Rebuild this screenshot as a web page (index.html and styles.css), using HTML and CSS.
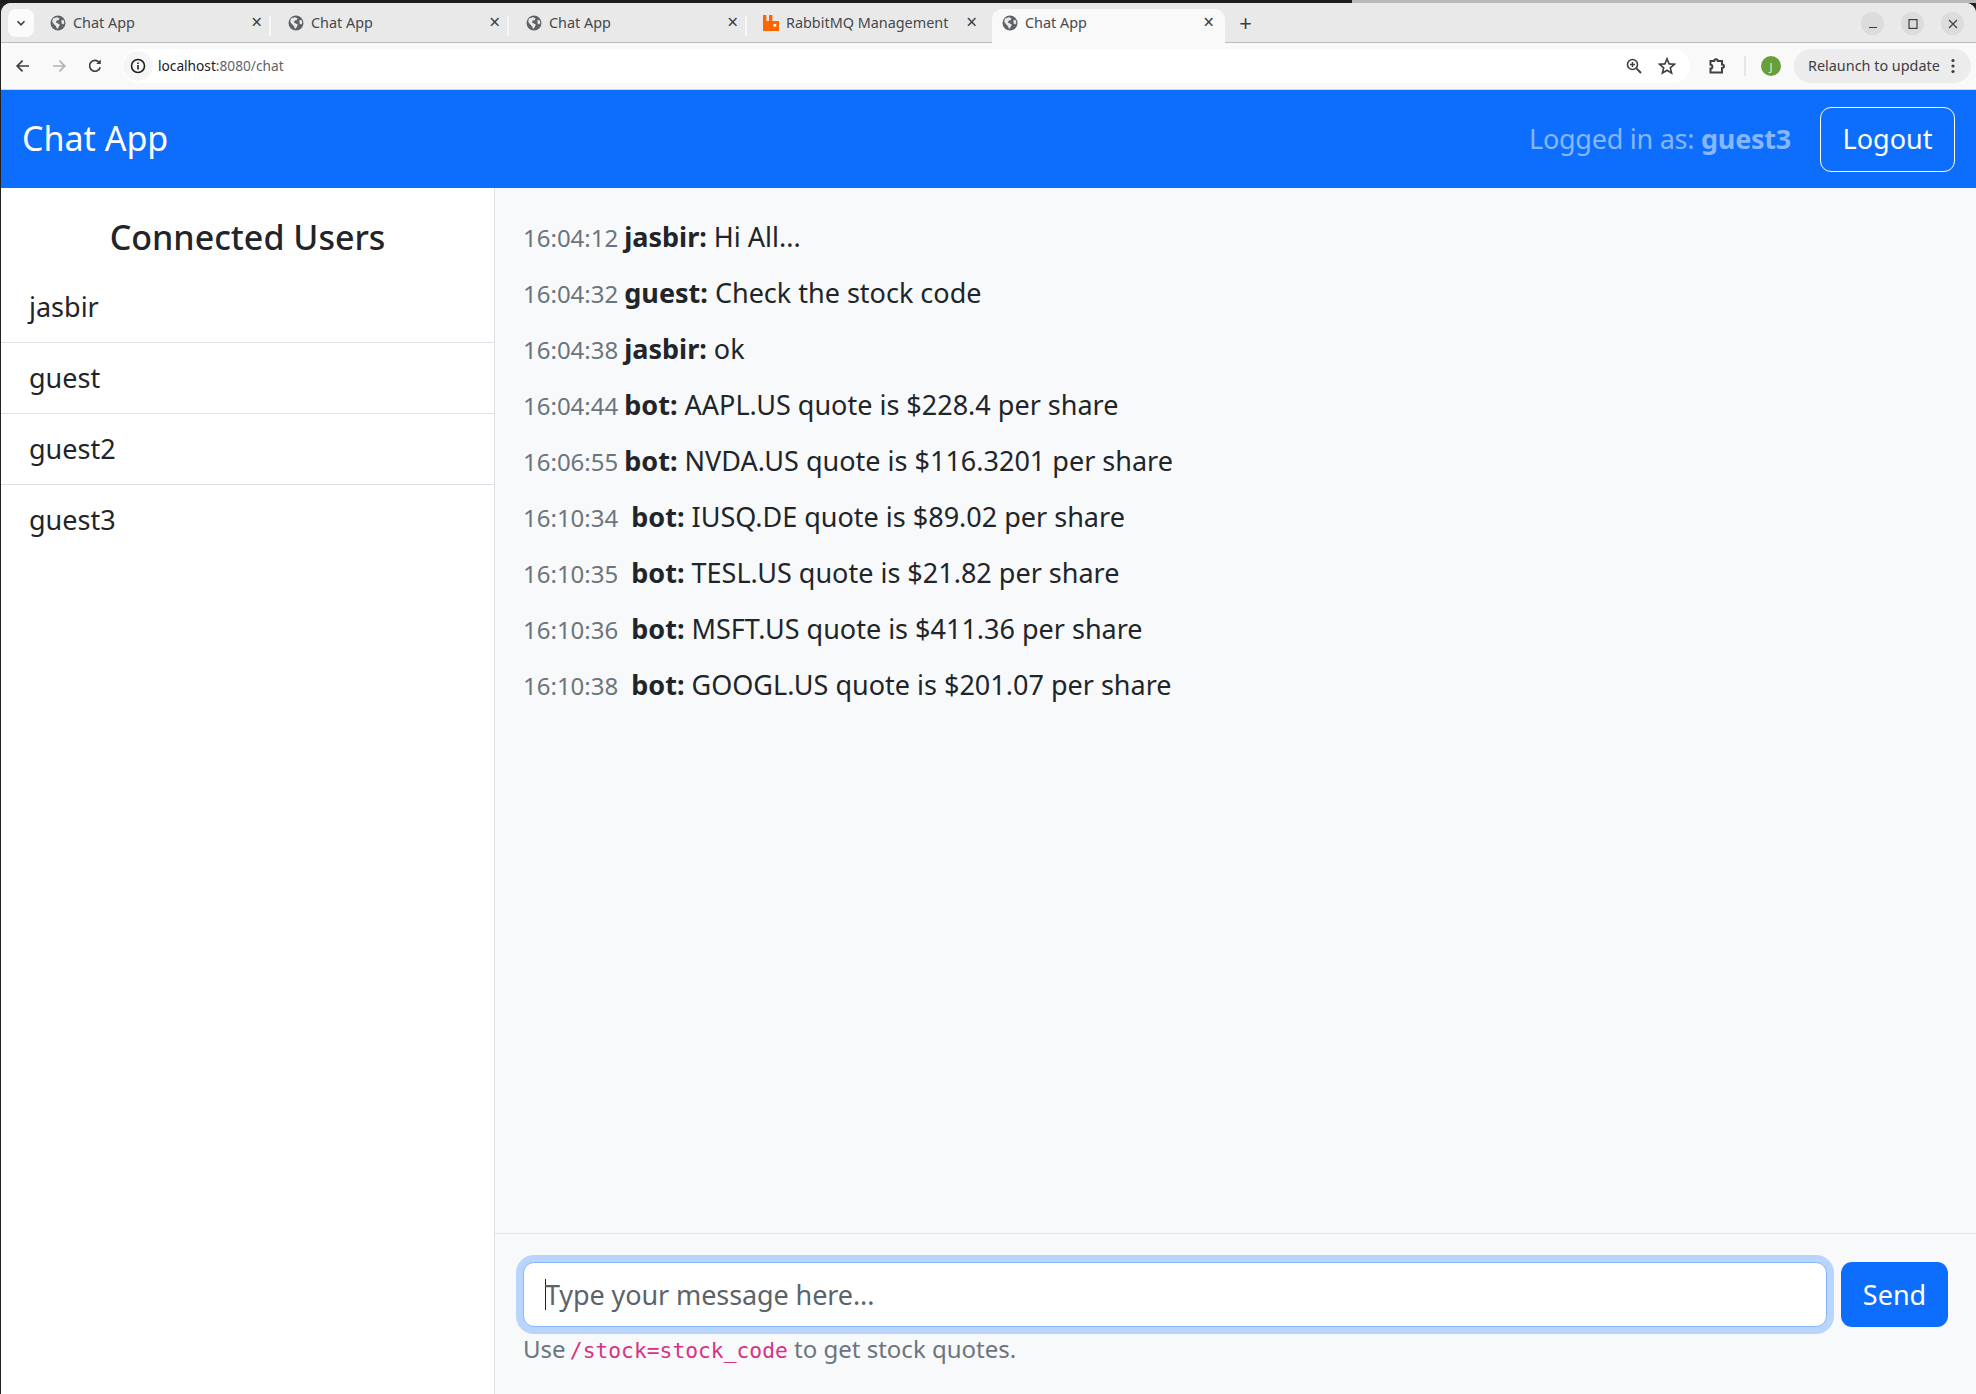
FILE: index.html
```html
<!DOCTYPE html>
<html lang="en">
<head>
    <meta charset="UTF-8">
    <title>Chat App</title>
    <link rel="stylesheet" href="styles.css">
</head>
<body>
    <svg class="defs" width="0" height="0">
        <symbol id="globe" viewBox="0 0 16 16">
            <circle cx="8" cy="8" r="7.5" fill="#5f6368"/>
            <path d="M3 3.5 7 2.2 9.6 3.4 8.6 5.2 6.6 5.6 6 7.4 7.8 8.6 9.8 9.6 8.8 12 7 14 6 11.2 3.6 8.8 2.2 6.4Z" fill="#e9e9e9"/>
            <path d="M11.4 5.6 13.4 4.8 14.4 7.8 13.2 9.6 11.6 8.4Z" fill="#e9e9e9"/>
        </symbol>
    </svg>

    <div class="desktop-strip">
        <div class="strip-dark"></div>
        <div class="strip-light"></div>
    </div>

    <div class="browser">
        <div class="tabstrip">
            <div class="tab-menu">
                <svg width="12" height="12" viewBox="0 0 12 12"><path d="M2.5 4.2 6 7.8 9.5 4.2" fill="none" stroke="#3c4043" stroke-width="1.6"/></svg>
            </div>
            <div class="tab">
                <svg class="favicon"><use href="#globe"/></svg>
                <span class="tab-title">Chat App</span>
                <span class="tab-close">×</span>
            </div>
            <div class="tab">
                <svg class="favicon"><use href="#globe"/></svg>
                <span class="tab-title">Chat App</span>
                <span class="tab-close">×</span>
            </div>
            <div class="tab">
                <svg class="favicon"><use href="#globe"/></svg>
                <span class="tab-title">Chat App</span>
                <span class="tab-close">×</span>
            </div>
            <div class="tab tab-last">
                <svg class="favicon" viewBox="0 0 16 16"><path d="M0 0H3.4V6H6V0H9.4V6H16V16H0Z" fill="#ff6600"/><rect x="10.6" y="9" width="2.6" height="2.6" fill="#fff"/></svg>
                <span class="tab-title">RabbitMQ Management</span>
                <span class="tab-close">×</span>
            </div>
            <div class="tab tab-active">
                <svg class="favicon"><use href="#globe"/></svg>
                <span class="tab-title">Chat App</span>
                <span class="tab-close">×</span>
            </div>
            <div class="new-tab">+</div>
            <div class="window-controls">
                <div class="win-btn"><svg width="12" height="12" viewBox="0 0 12 12"><path d="M2 9.5H10" stroke="#3c4043" stroke-width="1.2"/></svg></div>
                <div class="win-btn"><svg width="12" height="12" viewBox="0 0 12 12"><rect x="2" y="1.6" width="8" height="8.8" fill="none" stroke="#3c4043" stroke-width="1.2"/></svg></div>
                <div class="win-btn"><svg width="12" height="12" viewBox="0 0 12 12"><path d="M2 2 10 10M10 2 2 10" stroke="#3c4043" stroke-width="1.2"/></svg></div>
            </div>
        </div>

        <div class="toolbar">
            <div class="nav-icons">
                <svg width="16" height="16" viewBox="0 0 16 16"><path d="M14 8H2.6M7.6 2.6 2.2 8l5.4 5.4" fill="none" stroke="#3c4043" stroke-width="1.7"/></svg>
                <svg width="16" height="16" viewBox="0 0 16 16"><path d="M2 8H13.4M8.4 2.6 13.8 8l-5.4 5.4" fill="none" stroke="#b0b2b5" stroke-width="1.7"/></svg>
                <svg width="16" height="16" viewBox="0 0 16 16"><path d="M13.2 9.2A5.4 5.4 0 1 1 12 4.2" fill="none" stroke="#3c4043" stroke-width="1.7"/><path d="M13.8 1.4V6H9.2Z" fill="#3c4043"/></svg>
            </div>
            <div class="omnibox">
                <div class="site-info">
                    <svg width="16" height="16" viewBox="0 0 16 16"><circle cx="8" cy="8" r="6.5" fill="none" stroke="#202124" stroke-width="1.6"/><path d="M8 7V11.6M8 4.4V6" stroke="#202124" stroke-width="1.6"/></svg>
                </div>
                <span class="url"><span class="url-host">localhost</span>:8080/chat</span>
                <div class="omni-actions">
                    <svg width="18" height="18" viewBox="0 0 18 18"><circle cx="7.5" cy="7.5" r="5" fill="none" stroke="#3c4043" stroke-width="1.6"/><path d="M11.4 11.4 16 16" stroke="#3c4043" stroke-width="2"/><path d="M5 7.5H10M7.5 5V10" stroke="#3c4043" stroke-width="1.4"/></svg>
                    <svg width="18" height="18" viewBox="0 0 18 18"><path d="M9 1.8 11.1 6.9 16.4 7.3 12.3 10.8 13.6 16.1 9 13.2 4.4 16.1 5.7 10.8 1.6 7.3 6.9 6.9Z" fill="none" stroke="#3c4043" stroke-width="1.6"/></svg>
                </div>
            </div>
            <svg class="ext-icon" width="18" height="18" viewBox="0 0 18 18"><path d="M2.5 4H6.2C6.2 1.6 9.8 1.6 9.8 4H14V7.6C16.6 7.6 16.6 11 14 11V15.5H2.5V11.6C5 11.6 5 7.8 2.5 7.8Z" fill="none" stroke="#3c4043" stroke-width="2"/></svg>
            <div class="toolbar-sep"></div>
            <div class="avatar">J</div>
            <div class="relaunch">
                <span>Relaunch to update</span>
                <svg width="4" height="16" viewBox="0 0 4 16"><circle cx="2" cy="2.5" r="1.6" fill="#3c4043"/><circle cx="2" cy="8" r="1.6" fill="#3c4043"/><circle cx="2" cy="13.5" r="1.6" fill="#3c4043"/></svg>
            </div>
        </div>

        <nav class="navbar">
            <span class="brand">Chat App</span>
            <div class="nav-right">
                <span class="logged-in">Logged in as: <strong>guest3</strong></span>
                <button class="btn-logout">Logout</button>
            </div>
        </nav>

        <div class="main">
            <aside class="sidebar">
                <h4 class="sidebar-title">Connected Users</h4>
                <ul class="user-list">
                    <li class="user-item">jasbir</li>
                    <li class="user-item">guest</li>
                    <li class="user-item">guest2</li>
                    <li class="user-item">guest3</li>
                </ul>
            </aside>

            <section class="chat">
                <div class="messages">
                    <div class="message"><span class="time">16:04:12</span> <strong>jasbir:</strong> Hi All...</div>
                    <div class="message"><span class="time">16:04:32</span> <strong>guest:</strong> Check the stock code</div>
                    <div class="message"><span class="time">16:04:38</span> <strong>jasbir:</strong> ok</div>
                    <div class="message"><span class="time">16:04:44</span> <strong>bot:</strong> AAPL.US quote is $228.4 per share</div>
                    <div class="message"><span class="time">16:06:55</span> <strong>bot:</strong> NVDA.US quote is $116.3201 per share</div>
                    <div class="message"><span class="time time-wide">16:10:34</span> <strong>bot:</strong> IUSQ.DE quote is $89.02 per share</div>
                    <div class="message"><span class="time time-wide">16:10:35</span> <strong>bot:</strong> TESL.US quote is $21.82 per share</div>
                    <div class="message"><span class="time time-wide">16:10:36</span> <strong>bot:</strong> MSFT.US quote is $411.36 per share</div>
                    <div class="message"><span class="time time-wide">16:10:38</span> <strong>bot:</strong> GOOGL.US quote is $201.07 per share</div>
                </div>
                <div class="composer">
                    <div class="input-row">
                        <div class="message-input"><span class="caret"></span>Type your message here...</div>
                        <button class="btn-send">Send</button>
                    </div>
                    <div class="hint">Use <code>/stock=stock_code</code> to get stock quotes.</div>
                </div>
            </section>
        </div>
    </div>
</body>
</html>
```

FILE: styles.css
```css
* {
    box-sizing: border-box;
}
html, body {
    height: 100%;
}
body {
    margin: 0;
    height: 1394px;
    overflow: hidden;
    display: flex;
    flex-direction: column;
    font-family: "Noto Sans", sans-serif;
    color: #212529;
    background: #222;
}
.defs {
    display: none;
}

/* desktop behind the window */
.desktop-strip {
    display: flex;
    height: 3px;
    flex: none;
}
.strip-dark {
    width: 1352px;
    background: #1d1d1d;
}
.strip-light {
    flex: 1;
    background: #b9b9b9;
}
.browser {
    flex: 1;
    min-height: 0;
    display: flex;
    flex-direction: column;
    margin-left: 1px;
    border-radius: 10px 10px 0 0;
    overflow: hidden;
    background: #fff;
}

/* tab strip */
.tabstrip {
    height: 40px;
    flex: none;
    display: flex;
    align-items: flex-end;
    background: #e9e9e9;
    border-bottom: 1px solid #bdbdbd;
    font-size: 14.4px;
    color: #45494d;
}
.tab-menu {
    width: 26px;
    height: 28px;
    margin: 0 1px 5px 7px;
    border-radius: 8px;
    background: #fbfbfb;
    display: flex;
    align-items: center;
    justify-content: center;
}
.tab {
    width: 238px;
    height: 34px;
    margin-bottom: -1px;
    padding: 0 9px 7px 15px;
    display: flex;
    align-items: center;
    border-right: 2px solid transparent;
    background: linear-gradient(#f7f7f7, #f7f7f7) right 7px / 2px 20px no-repeat;
}
.tab-last {
    background: none;
    padding-left: 14px;
    padding-right: 13px;
    width: 243px;
}
.tab-active {
    width: 233px;
    padding-left: 10px;
    padding-right: 11px;
    background: #f9f9f9;
    border-radius: 10px 10px 0 0;
    border: 0;
    margin-bottom: -1px;
    z-index: 1;
}
.favicon {
    width: 16px;
    height: 16px;
    flex: none;
    margin-right: 7px;
}
.tab-title {
    flex: 1;
    white-space: nowrap;
}
.tab-close {
    font-size: 19px;
    line-height: 1;
    color: #3c4043;
}
.new-tab {
    width: 36px;
    height: 34px;
    padding-left: 5px;
    font-size: 22px;
    line-height: 28px;
    color: #3c4043;
    text-align: center;
}
.window-controls {
    margin-left: auto;
    margin-right: 12px;
    margin-bottom: 7px;
    display: flex;
    gap: 17px;
}
.win-btn {
    width: 23px;
    height: 23px;
    border-radius: 50%;
    background: #dcdcdc;
    display: flex;
    align-items: center;
    justify-content: center;
}

/* toolbar */
.toolbar {
    height: 47px;
    flex: none;
    display: flex;
    align-items: center;
    background: #f9f9f9;
    border-bottom: 1px solid #d5d5d5;
    font-size: 14px;
}
.nav-icons {
    display: flex;
    gap: 20px;
    padding-left: 14px;
    width: 121px;
}
.omnibox {
    width: 1568px;
    height: 34px;
    display: flex;
    align-items: center;
    background: #fff;
    border-radius: 17px;
}
.site-info {
    width: 30px;
    height: 30px;
    margin: 0 5px 0 1px;
    border-radius: 50%;
    background: #f5f5f5;
    display: flex;
    align-items: center;
    justify-content: center;
}
.url {
    flex: 1;
    padding-bottom: 1px;
    font-size: 13.7px;
    color: #5f6368;
}
.url-host {
    color: #202124;
}
.omni-actions {
    display: flex;
    gap: 15px;
    padding-right: 14px;
    align-items: center;
}
.ext-icon {
    margin-left: 18px;
    flex: none;
}
.toolbar-sep {
    width: 2px;
    height: 20px;
    margin: 0 15px 0 18px;
    background: #e6e6e6;
}
.avatar {
    width: 20px;
    height: 20px;
    border-radius: 50%;
    background: #689f38;
    color: #e8f0dc;
    font-size: 11px;
    display: flex;
    align-items: center;
    justify-content: center;
}
.relaunch {
    width: 177px;
    height: 34px;
    margin-left: 13px;
    padding: 0 16px 1px 14px;
    border-radius: 17px;
    background: #ececec;
    font-size: 14.4px;
    color: #3c4043;
    display: flex;
    align-items: center;
    justify-content: space-between;
    white-space: nowrap;
}

/* page navbar */
.navbar {
    height: 98px;
    flex: none;
    display: flex;
    align-items: center;
    justify-content: space-between;
    padding: 0 21px;
    background: #0d6efd;
}
.brand {
    padding-bottom: 2px;
    font-size: 34px;
    color: #fff;
}
.nav-right {
    display: flex;
    align-items: center;
    gap: 29px;
}
.logged-in {
    padding-bottom: 2px;
    font-size: 27px;
    letter-spacing: -0.25px;
    color: #86b7fe;
}
.btn-logout {
    width: 135px;
    height: 65px;
    padding: 0 0 2px;
    background: none;
    border: 1px solid #fff;
    border-radius: 11px;
    color: #fff;
    font: inherit;
    font-size: 27px;
}

/* main area */
.main {
    flex: 1;
    min-height: 0;
    display: flex;
}
.sidebar {
    width: 494px;
    flex: none;
    background: #fff;
    border-right: 1px solid #dee2e6;
}
.sidebar-title {
    margin: 0;
    padding: 29px 0 0;
    height: 84px;
    font-size: 34px;
    font-weight: 500;
    line-height: 40px;
    text-align: center;
}
.user-list {
    list-style: none;
    margin: 0;
    padding: 0;
}
.user-item {
    height: 71px;
    padding: 15px 28px 0;
    font-size: 27px;
    line-height: 40px;
    border-bottom: 1px solid #dee2e6;
}
.user-item:last-child {
    border-bottom: 0;
}
.chat {
    flex: 1;
    min-width: 0;
    display: flex;
    flex-direction: column;
    background: #f8f9fa;
}
.messages {
    flex: 1;
    padding: 29px 28px 0;
}
.message {
    height: 40px;
    margin-bottom: 16px;
    font-size: 27px;
    line-height: 40px;
}
.time {
    margin-right: -1px;
    font-size: 24px;
    color: #6c757d;
}
.time-wide {
    margin-right: 6px;
}
.composer {
    height: 161px;
    flex: none;
    padding: 28px 28px 0;
    border-top: 1px solid #dee2e6;
}
.input-row {
    display: flex;
    gap: 14px;
}
.message-input {
    flex: 1;
    height: 65px;
    padding-left: 21px;
    background: #fff;
    border: 1px solid #86b7fe;
    border-radius: 11px;
    box-shadow: 0 0 0 7px #bad5fd;
    font-size: 27px;
    line-height: 63px;
    letter-spacing: -0.1px;
    color: #5c636a;
    display: flex;
    align-items: center;
}
.caret {
    width: 1px;
    height: 31px;
    margin-right: -1px;
    background: #212529;
}
.btn-send {
    width: 107px;
    height: 65px;
    background: #0d6efd;
    border: 0;
    border-radius: 11px;
    color: #fff;
    font: inherit;
    font-size: 27px;
}
.hint {
    margin-top: 5px;
    font-size: 24px;
    line-height: 34px;
    color: #6c757d;
}
.hint code {
    margin-left: -2px;
    font-family: "DejaVu Sans Mono", monospace;
    font-size: 21.3px;
    color: #d63384;
}
```
